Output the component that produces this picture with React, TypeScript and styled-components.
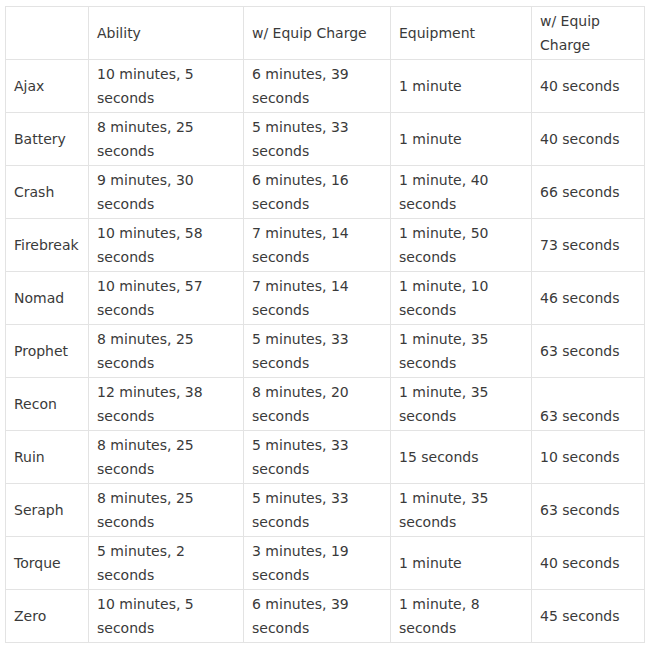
import React from "react";
import styled, { createGlobalStyle } from "styled-components";

const Global = createGlobalStyle`
  html, body { margin: 0; padding: 0; background: #fff; }
  body { font-family: "DejaVu Sans", Verdana, sans-serif; }
`;

const Wrap = styled.div`
  padding: 6px 0 0 5px;
`;

const Table = styled.table`
  border-collapse: collapse;
  table-layout: fixed;
  width: 639px;
  font-size: 14px;
  line-height: 24px;
  color: #3a3a3a;
`;

const Cell = styled.td`
  border: 1px solid #e3e3e3;
  padding: 2px 8px;
  vertical-align: middle;
  text-align: left;
  font-weight: normal;
  overflow: hidden;
`;

const HeadCell = styled(Cell).attrs({ as: "th" })``;

const widths = [83, 155, 147, 141, 113];

type Row = [string, string, string, string, string];

const rows: Row[] = [
  ["Ajax", "10 minutes, 5 seconds", "6 minutes, 39 seconds", "1 minute", "40 seconds"],
  ["Battery", "8 minutes, 25 seconds", "5 minutes, 33 seconds", "1 minute", "40 seconds"],
  ["Crash", "9 minutes, 30 seconds", "6 minutes, 16 seconds", "1 minute, 40 seconds", "66 seconds"],
  ["Firebreak", "10 minutes, 58 seconds", "7 minutes, 14 seconds", "1 minute, 50 seconds", "73 seconds"],
  ["Nomad", "10 minutes, 57 seconds", "7 minutes, 14 seconds", "1 minute, 10 seconds", "46 seconds"],
  ["Prophet", "8 minutes, 25 seconds", "5 minutes, 33 seconds", "1 minute, 35 seconds", "63 seconds"],
  ["Recon", "12 minutes, 38 seconds", "8 minutes, 20 seconds", "1 minute, 35 seconds", "\n63 seconds"],
  ["Ruin", "8 minutes, 25 seconds", "5 minutes, 33 seconds", "15 seconds", "10 seconds"],
  ["Seraph", "8 minutes, 25 seconds", "5 minutes, 33 seconds", "1 minute, 35 seconds", "63 seconds"],
  ["Torque", "5 minutes, 2 seconds", "3 minutes, 19 seconds", "1 minute", "40 seconds"],
  ["Zero", "10 minutes, 5 seconds", "6 minutes, 39 seconds", "1 minute, 8 seconds", "45 seconds"],
];

const renderText = (t: string) => {
  if (t.startsWith("\n")) {
    return (
      <>
        <br />
        {t.slice(1)}
      </>
    );
  }
  return t;
};

export default function App() {
  return (
    <>
      <Global />
      <Wrap>
        <Table>
          <colgroup>
            {widths.map((w, i) => (
              <col key={i} style={{ width: w }} />
            ))}
          </colgroup>
          <thead>
            <tr>
              <HeadCell></HeadCell>
              <HeadCell>Ability</HeadCell>
              <HeadCell>w/ Equip Charge</HeadCell>
              <HeadCell>Equipment</HeadCell>
              <HeadCell>w/ Equip Charge</HeadCell>
            </tr>
          </thead>
          <tbody>
            {rows.map((r) => (
              <tr key={r[0]}>
                {r.map((c, i) => (
                  <Cell key={i}>{renderText(c)}</Cell>
                ))}
              </tr>
            ))}
          </tbody>
        </Table>
      </Wrap>
    </>
  );
}
